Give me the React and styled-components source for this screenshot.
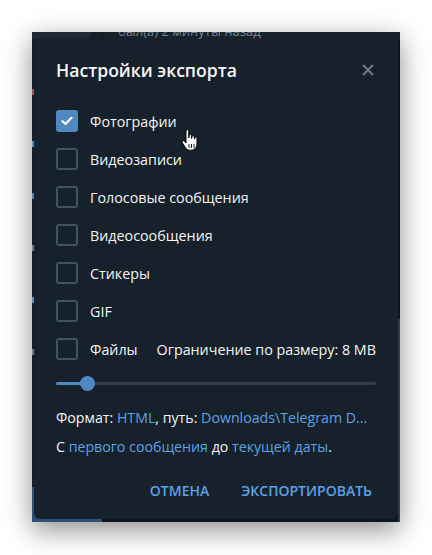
import React from 'react';
import styled, { createGlobalStyle } from 'styled-components';

const GlobalStyle = createGlobalStyle`
  body {
    margin: 0;
    background: #ffffff;
    font-family: "Open Sans", "Noto Sans", sans-serif;
  }
`;

const Page = styled.div`
  padding: 32px;
`;

const Window = styled.div`
  position: relative;
  width: 368px;
  height: 490px;
  overflow: hidden;
  background: #0e1621;
  box-shadow: 0 8px 26px rgba(0, 0, 0, 0.45);
`;

const AppLayout = styled.div`
  display: flex;
  height: 100%;
`;

const Sidebar = styled.div`
  width: 70px;
  display: flex;
  flex-direction: column;
  background: #151e27;
  border-right: 1px solid #0b1118;
`;

const SearchBox = styled.div`
  height: 7px;
  margin-right: 10px;
  background: #1d2834;
  border-radius: 0 0 6px 0;
`;

const SidebarFill = styled.div`
  flex: 1;
  display: flex;
  flex-direction: column;
  gap: 46px;
  padding-top: 50px;
`;

const Dot = styled.div`
  width: 3px;
  height: 6px;
  background: ${props => props.color};
`;

const SelectedChat = styled.div`
  height: 34px;
  background: #2b5278;
  color: #ffffff;
  font-size: 12px;
  line-height: 18px;
  padding: 1px 0 0 4px;
`;

const ChatArea = styled.div`
  flex: 1;
  display: flex;
  flex-direction: column;
`;

const ChatHeader = styled.div`
  height: 7px;
  background: #17212b;
  padding-left: 15px;
  overflow: hidden;
`;

const Status = styled.div`
  margin-top: -9px;
  font-size: 13px;
  line-height: 16px;
  color: #708499;
`;

const ChatBody = styled.div`
  flex: 1;
  display: flex;
  justify-content: flex-end;
`;

const ScrollStrip = styled.div`
  width: 2px;
  margin-top: 280px;
  background: #2a3d52;
`;

const Dialog = styled.div`
  position: absolute;
  top: 7px;
  left: 2px;
  right: 2px;
  bottom: 3px;
  display: flex;
  flex-direction: column;
  padding: 0 22px 11px;
  background: #17212b;
  border-radius: 0 0 6px 6px;
  color: #f5f5f5;
`;

const TitleRow = styled.div`
  display: flex;
  align-items: center;
  justify-content: space-between;
  height: 24px;
  margin-top: 19px;
`;

const Title = styled.h2`
  margin: 0;
  font-size: 17.6px;
  font-weight: 600;
  color: #f5f5f5;
`;

const CloseButton = styled.button`
  display: flex;
  align-items: center;
  justify-content: center;
  width: 16px;
  height: 16px;
  padding: 0;
  border: none;
  background: none;
  cursor: pointer;
`;

const OptionList = styled.div`
  display: flex;
  flex-direction: column;
  gap: 16px;
  margin-top: 28px;
`;

const OptionRow = styled.label`
  display: flex;
  align-items: center;
  height: 22px;
  font-size: 14.3px;
  color: #f5f5f5;
`;

const Box = styled.span`
  box-sizing: border-box;
  display: flex;
  align-items: center;
  justify-content: center;
  width: 22px;
  height: 22px;
  margin-right: 12px;
  border-radius: 3px;
  border: 2px solid ${props => (props.checked ? '#5288c1' : '#3f5266')};
  background: ${props => (props.checked ? '#5288c1' : 'transparent')};
`;

const Limit = styled.span`
  margin-left: 19px;
`;

const Slider = styled.div`
  position: relative;
  height: 15px;
  margin-top: 16px;
  display: flex;
  align-items: center;
`;

const Track = styled.div`
  flex: 1;
  height: 3px;
  background: #303d4b;
  border-radius: 2px;
  overflow: hidden;
`;

const TrackFill = styled.div`
  height: 100%;
  background: #5288c1;
`;

const Thumb = styled.div`
  position: absolute;
  top: 0;
  width: 15px;
  height: 15px;
  border-radius: 50%;
  background: #5288c1;
`;

const InfoLine = styled.div`
  font-size: 14.2px;
  line-height: 20px;
  color: #f5f5f5;
  margin-top: ${props => props.gap}px;
  white-space: nowrap;
`;

const Link = styled.span`
  color: #5ea2e6;
`;

const Buttons = styled.div`
  display: flex;
  justify-content: flex-end;
  gap: 24px;
  margin-top: 15px;
`;

const TextButton = styled.button`
  height: 36px;
  padding: 0 4px;
  border: none;
  background: none;
  font-family: "Open Sans", sans-serif;
  font-size: 14px;
  font-weight: 600;
  color: #5ea2e6;
  cursor: pointer;
`;

const Cursor = styled.svg`
  position: absolute;
  left: 149px;
  top: 97px;
`;

const options = [
  { name: 'Фотографии', checked: true },
  { name: 'Видеозаписи' },
  { name: 'Голосовые сообщения' },
  { name: 'Видеосообщения' },
  { name: 'Стикеры' },
  { name: 'GIF' },
  { name: 'Файлы', limit: 'Ограничение по размеру: 8 MB' },
];

const Check = () => (
  <svg width="12" height="10" viewBox="0 0 12 10">
    <path d="M1.5 5.2 L4.5 8 L10.5 1.8" fill="none" stroke="#fff" strokeWidth="2.2" strokeLinecap="round" strokeLinejoin="round" />
  </svg>
);

const CloseIcon = () => (
  <svg width="12" height="12" viewBox="0 0 12 12">
    <path d="M1 1 L11 11 M11 1 L1 11" stroke="#6c7883" strokeWidth="2" />
  </svg>
);

const HandCursor = () => (
  <Cursor width="18" height="24" viewBox="0 0 18 24">
    <path
      d="M5 2.2c0-.9.6-1.5 1.4-1.5s1.4.6 1.4 1.5V9l.2-2.2c.1-.8.6-1.3 1.3-1.3s1.3.5 1.3 1.3V9.5l.2-1.6c.1-.8.6-1.2 1.3-1.2s1.3.5 1.3 1.2v2.3l.2-1c.1-.7.6-1.1 1.2-1.1.7 0 1.2.5 1.2 1.3v5.4c0 3.6-2.5 6.4-5.9 6.4H9c-2 0-3.4-.9-4.6-2.6L1.5 14c-.5-.8-.3-1.6.3-2 .7-.4 1.4-.2 1.9.4L5 14V2.2z"
      fill="#ffffff"
      stroke="#000000"
      strokeWidth="1"
    />
    <path d="M8 15v4 M10.5 15v4 M13 15v4" stroke="#000" strokeWidth="0.9" />
  </Cursor>
);

const App = () => {
  const sizePercent = 9.7;
  return (
    <Page>
      <GlobalStyle />
      <Window>
        <AppLayout>
          <Sidebar>
            <SearchBox />
            <SidebarFill>
              <Dot color="#b5484b" />
              <Dot color="#5a8fb8" />
              <Dot color="#4f7fa6" />
              <Dot color="#6a7f93" />
              <Dot color="#5a8fb8" />
              <Dot color="#6a7f93" />
            </SidebarFill>
            <SelectedChat>Ещё</SelectedChat>
          </Sidebar>
          <ChatArea>
            <ChatHeader>
              <Status>был(а) 2 минуты назад</Status>
            </ChatHeader>
            <ChatBody>
              <ScrollStrip />
            </ChatBody>
          </ChatArea>
        </AppLayout>

        <Dialog>
          <TitleRow>
            <Title>Настройки экспорта</Title>
            <CloseButton aria-label="Закрыть">
              <CloseIcon />
            </CloseButton>
          </TitleRow>

          <OptionList>
            {options.map(option => (
              <OptionRow key={option.name}>
                <Box checked={option.checked}>{option.checked && <Check />}</Box>
                {option.name}
                {option.limit && <Limit>{option.limit}</Limit>}
              </OptionRow>
            ))}
          </OptionList>

          <Slider>
            <Track>
              <TrackFill style={{ width: `${sizePercent}%` }} />
            </Track>
            <Thumb style={{ left: `calc(${sizePercent}% - 7.5px)` }} />
          </Slider>

          <InfoLine gap={18}>
            Формат: <Link>HTML</Link>, путь: <Link>Downloads\Telegram D...</Link>
          </InfoLine>
          <InfoLine gap={9}>
            С <Link>первого сообщения</Link> до <Link>текущей даты</Link>.
          </InfoLine>

          <Buttons>
            <TextButton>ОТМЕНА</TextButton>
            <TextButton>ЭКСПОРТИРОВАТЬ</TextButton>
          </Buttons>
        </Dialog>

        <HandCursor />
      </Window>
    </Page>
  );
};

export default App;
